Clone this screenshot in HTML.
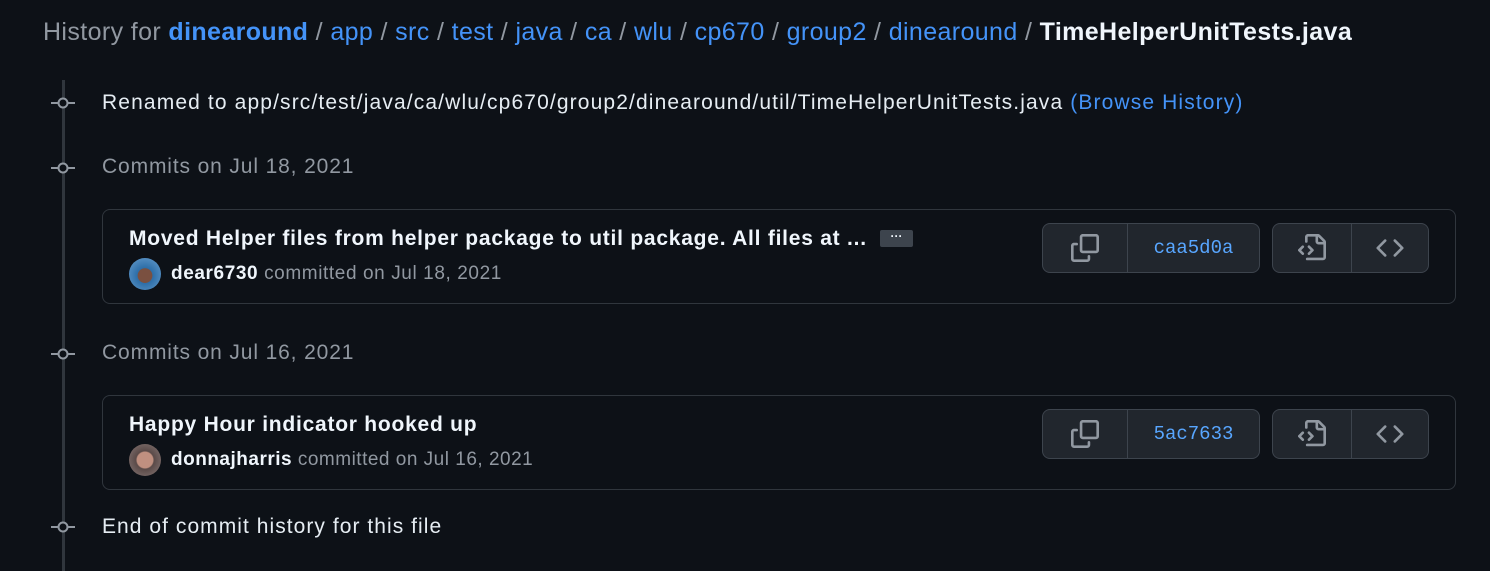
<!DOCTYPE html>
<html><head><style>
body{margin:0;background:#0d1117;width:1490px;height:571px;overflow:hidden;font-family:"Liberation Sans",sans-serif;color:#e6edf3;position:relative}
.a{position:absolute;white-space:nowrap}
.b{color:#4493f8;font-weight:bold}
.line{position:absolute;left:62px;top:80px;width:3px;height:491px;background:#30363d}
.node{position:absolute;left:51px;width:24px;height:12px}
.box{position:absolute;left:102px;width:1354px;height:95px;border:1px solid #30363d;border-radius:8px;box-sizing:border-box}
.grp{position:absolute;top:13px;height:50px;border:1px solid #3d444d;border-radius:8px;background:#21262d;box-sizing:border-box;display:flex}
.grp>div{display:flex;align-items:center;justify-content:center;height:100%}
.hash{font-family:"Liberation Mono",monospace;color:#58a6ff;font-size:19px;border-left:1px solid #3d444d}
.av{position:absolute;left:26px;top:48px;width:32px;height:32px;border-radius:50%}
</style></head><body>
<div class="a" style="left:43px;top:18px;font-size:25px;letter-spacing:0.38px;color:#9198a1">History for <span class="b">dinearound</span> / <span style="color:#4493f8">app</span> / <span style="color:#4493f8">src</span> / <span style="color:#4493f8">test</span> / <span style="color:#4493f8">java</span> / <span style="color:#4493f8">ca</span> / <span style="color:#4493f8">wlu</span> / <span style="color:#4493f8">cp670</span> / <span style="color:#4493f8">group2</span> / <span style="color:#4493f8">dinearound</span> / <b style="color:#f0f6fc">TimeHelperUnitTests.java</b></div>
<div class="line"></div>
<svg class="node" style="top:97px" viewBox="0 0 24 12"><line x1="0" y1="6" x2="24" y2="6" stroke="#9198a1" stroke-width="2"/><circle cx="12" cy="6" r="4.5" fill="#0d1117" stroke="#9198a1" stroke-width="2"/></svg>
<svg class="node" style="top:162px" viewBox="0 0 24 12"><line x1="0" y1="6" x2="24" y2="6" stroke="#9198a1" stroke-width="2"/><circle cx="12" cy="6" r="4.5" fill="#0d1117" stroke="#9198a1" stroke-width="2"/></svg>
<svg class="node" style="top:348px" viewBox="0 0 24 12"><line x1="0" y1="6" x2="24" y2="6" stroke="#9198a1" stroke-width="2"/><circle cx="12" cy="6" r="4.5" fill="#0d1117" stroke="#9198a1" stroke-width="2"/></svg>
<svg class="node" style="top:521px" viewBox="0 0 24 12"><line x1="0" y1="6" x2="24" y2="6" stroke="#9198a1" stroke-width="2"/><circle cx="12" cy="6" r="4.5" fill="#0d1117" stroke="#9198a1" stroke-width="2"/></svg>
<div class="a" style="left:102px;top:91px;font-size:21px;letter-spacing:1.13px">Renamed to app/src/test/java/ca/wlu/cp670/group2/dinearound/util/TimeHelperUnitTests.java <span style="color:#4493f8">(Browse History)</span></div>
<div class="a" style="left:102px;top:155px;font-size:21px;letter-spacing:0.87px;color:#9198a1">Commits on Jul 18, 2021</div>
<div class="box" style="top:209px">
<div class="a" style="left:26px;top:17px;font-size:21px;letter-spacing:0.76px;font-weight:bold;color:#f0f6fc">Moved Helper files from helper package to util package. All files at ...</div>
<div class="a" style="left:777px;top:20px;width:33px;height:17px;background:#3d444d;border-radius:2px;color:#f0f6fc;font-size:12px;text-align:center;line-height:12px;font-weight:bold">···</div>
<div class="av" style="background:radial-gradient(circle at 50% 55%,#7a5040 0 30%,#2d6ea8 32%,#6aa0d0 100%)"></div>
<div class="a" style="left:68px;top:53px;font-size:19px;letter-spacing:0.6px;color:#9198a1"><b style="color:#f0f6fc">dear6730</b> committed on Jul 18, 2021</div>
<div class="grp" style="left:939px;width:218px"><div style="width:84px"><svg width="28" height="28" viewBox="0 0 16 16" fill="#9198a1"><path d="M0 6.75C0 5.784.784 5 1.75 5h1.5a.75.75 0 0 1 0 1.5h-1.5a.25.25 0 0 0-.25.25v7.5c0 .138.112.25.25.25h7.5a.25.25 0 0 0 .25-.25v-1.5a.75.75 0 0 1 1.5 0v1.5A1.75 1.75 0 0 1 9.25 16h-7.5A1.75 1.75 0 0 1 0 14.25Z"/><path d="M5 1.75C5 .784 5.784 0 6.75 0h7.5C15.216 0 16 .784 16 1.75v7.5A1.75 1.75 0 0 1 14.25 11h-7.5A1.75 1.75 0 0 1 5 9.25Zm1.75-.25a.25.25 0 0 0-.25.25v7.5c0 .138.112.25.25.25h7.5a.25.25 0 0 0 .25-.25v-7.5a.25.25 0 0 0-.25-.25Z"/></svg></div><div class="hash" style="flex:1">caa5d0a</div></div>
<div class="grp" style="left:1169px;width:157px"><div style="width:78px"><svg width="28" height="28" viewBox="0 0 16 16" fill="#9198a1"><path d="M4 1.75C4 .784 4.784 0 5.75 0h5.586c.464 0 .909.184 1.237.513l2.914 2.914c.329.328.513.773.513 1.237v8.586A1.75 1.75 0 0 1 14.25 15h-9a.75.75 0 0 1 0-1.5h9a.25.25 0 0 0 .25-.25V6h-2.75A1.75 1.75 0 0 1 10 4.25V1.5H5.75a.25.25 0 0 0-.25.25v2.5a.75.75 0 0 1-1.5 0Zm7.5-.188V4.250c0 .138.112.25.25.25h2.688ZM5.72 6.72a.75.75 0 0 1 1.06 0l2 2a.75.75 0 0 1 0 1.06l-2 2a.75.75 0 0 1-1.06-1.06l1.47-1.47-1.47-1.47a.75.75 0 0 1 0-1.06ZM3.28 7.78 1.81 9.25l1.47 1.47a.75.75 0 0 1-1.06 1.06l-2-2a.75.75 0 0 1 0-1.06l2-2a.75.75 0 0 1 1.06 1.06Z"/></svg></div><div style="flex:1;border-left:1px solid #3d444d"><svg width="28" height="28" viewBox="0 0 16 16" fill="#9198a1"><path d="m11.28 3.22 4.25 4.25a.75.75 0 0 1 0 1.06l-4.25 4.25a.749.749 0 0 1-1.275-.326.749.749 0 0 1 .215-.734L13.94 8l-3.72-3.72a.749.749 0 0 1 .326-1.275.749.749 0 0 1 .734.215Zm-6.56 0a.751.751 0 0 1 1.042.018.751.751 0 0 1 .018 1.042L2.06 8l3.72 3.72a.749.749 0 0 1-.326 1.275.749.749 0 0 1-.734-.215L.47 8.53a.75.75 0 0 1 0-1.06Z"/></svg></div></div>
</div>
<div class="a" style="left:102px;top:341px;font-size:21px;letter-spacing:0.87px;color:#9198a1">Commits on Jul 16, 2021</div>
<div class="box" style="top:395px">
<div class="a" style="left:26px;top:17px;font-size:21px;letter-spacing:0.76px;font-weight:bold;color:#f0f6fc">Happy Hour indicator hooked up</div>
<div class="av" style="background:radial-gradient(circle at 50% 50%,#c09080 0 35%,#5a4a48 40%,#8a7a78 100%)"></div>
<div class="a" style="left:68px;top:53px;font-size:19px;letter-spacing:0.5px;color:#9198a1"><b style="color:#f0f6fc">donnajharris</b> committed on Jul 16, 2021</div>
<div class="grp" style="left:939px;width:218px"><div style="width:84px"><svg width="28" height="28" viewBox="0 0 16 16" fill="#9198a1"><path d="M0 6.75C0 5.784.784 5 1.75 5h1.5a.75.75 0 0 1 0 1.5h-1.5a.25.25 0 0 0-.25.25v7.5c0 .138.112.25.25.25h7.5a.25.25 0 0 0 .25-.25v-1.5a.75.75 0 0 1 1.5 0v1.5A1.75 1.75 0 0 1 9.25 16h-7.5A1.75 1.75 0 0 1 0 14.25Z"/><path d="M5 1.75C5 .784 5.784 0 6.75 0h7.5C15.216 0 16 .784 16 1.75v7.5A1.75 1.75 0 0 1 14.25 11h-7.5A1.75 1.75 0 0 1 5 9.25Zm1.75-.25a.25.25 0 0 0-.25.25v7.5c0 .138.112.25.25.25h7.5a.25.25 0 0 0 .25-.25v-7.5a.25.25 0 0 0-.25-.25Z"/></svg></div><div class="hash" style="flex:1">5ac7633</div></div>
<div class="grp" style="left:1169px;width:157px"><div style="width:78px"><svg width="28" height="28" viewBox="0 0 16 16" fill="#9198a1"><path d="M4 1.75C4 .784 4.784 0 5.75 0h5.586c.464 0 .909.184 1.237.513l2.914 2.914c.329.328.513.773.513 1.237v8.586A1.75 1.75 0 0 1 14.25 15h-9a.75.75 0 0 1 0-1.5h9a.25.25 0 0 0 .25-.25V6h-2.75A1.75 1.75 0 0 1 10 4.25V1.5H5.75a.25.25 0 0 0-.25.25v2.5a.75.75 0 0 1-1.5 0Zm7.5-.188V4.25c0 .138.112.25.25.25h2.688ZM5.72 6.72a.75.75 0 0 1 1.06 0l2 2a.75.75 0 0 1 0 1.06l-2 2a.75.75 0 0 1-1.06-1.06l1.47-1.47-1.47-1.47a.75.75 0 0 1 0-1.06ZM3.28 7.78 1.81 9.25l1.47 1.47a.75.75 0 0 1-1.06 1.06l-2-2a.75.75 0 0 1 0-1.06l2-2a.75.75 0 0 1 1.06 1.06Z"/></svg></div><div style="flex:1;border-left:1px solid #3d444d"><svg width="28" height="28" viewBox="0 0 16 16" fill="#9198a1"><path d="m11.28 3.22 4.25 4.25a.75.75 0 0 1 0 1.06l-4.25 4.25a.749.749 0 0 1-1.275-.326.749.749 0 0 1 .215-.734L13.94 8l-3.72-3.72a.749.749 0 0 1 .326-1.275.749.749 0 0 1 .734.215Zm-6.56 0a.751.751 0 0 1 1.042.018.751.751 0 0 1 .018 1.042L2.06 8l3.72 3.72a.749.749 0 0 1-.326 1.275.749.749 0 0 1-.734-.215L.47 8.53a.75.75 0 0 1 0-1.06Z"/></svg></div></div>
</div>
<div class="a" style="left:102px;top:515px;font-size:21px;letter-spacing:1.05px">End of commit history for this file</div>
</body></html>
